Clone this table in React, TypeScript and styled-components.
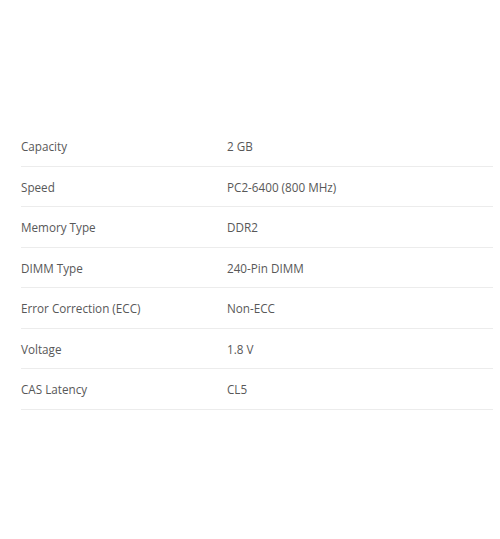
import * as React from 'react';
import styled, { createGlobalStyle } from 'styled-components';

const GlobalStyle = createGlobalStyle`
  html, body {
    margin: 0;
    padding: 0;
    background: #ffffff;
  }
  body {
    font-family: 'Open Sans', 'Liberation Sans', sans-serif;
  }
`;

const Page = styled.div`
  width: 500px;
  height: 539px;
  padding: 126px 7px 0 21px;
  box-sizing: border-box;
`;

const SpecTable = styled.div`
  display: flex;
  flex-direction: column;
`;

const SpecRow = styled.div`
  display: grid;
  grid-template-columns: 206px 1fr;
  align-items: center;
  height: 40.5px;
  padding-top: 1px;
  box-sizing: border-box;
  border-bottom: 1px solid #ececec;
  font-size: 11.7px;
  color: #585858;
`;

const SpecLabel = styled.span``;

const SpecValue = styled.span``;

const specs = [
  { label: 'Capacity', value: '2 GB' },
  { label: 'Speed', value: 'PC2-6400 (800 MHz)' },
  { label: 'Memory Type', value: 'DDR2' },
  { label: 'DIMM Type', value: '240-Pin DIMM' },
  { label: 'Error Correction (ECC)', value: 'Non-ECC' },
  { label: 'Voltage', value: '1.8 V' },
  { label: 'CAS Latency', value: 'CL5' },
];

export default function App() {
  return (
    <>
      <GlobalStyle />
      <Page>
        <SpecTable>
          {specs.map((spec) => (
            <SpecRow key={spec.label}>
              <SpecLabel>{spec.label}</SpecLabel>
              <SpecValue>{spec.value}</SpecValue>
            </SpecRow>
          ))}
        </SpecTable>
      </Page>
    </>
  );
}
